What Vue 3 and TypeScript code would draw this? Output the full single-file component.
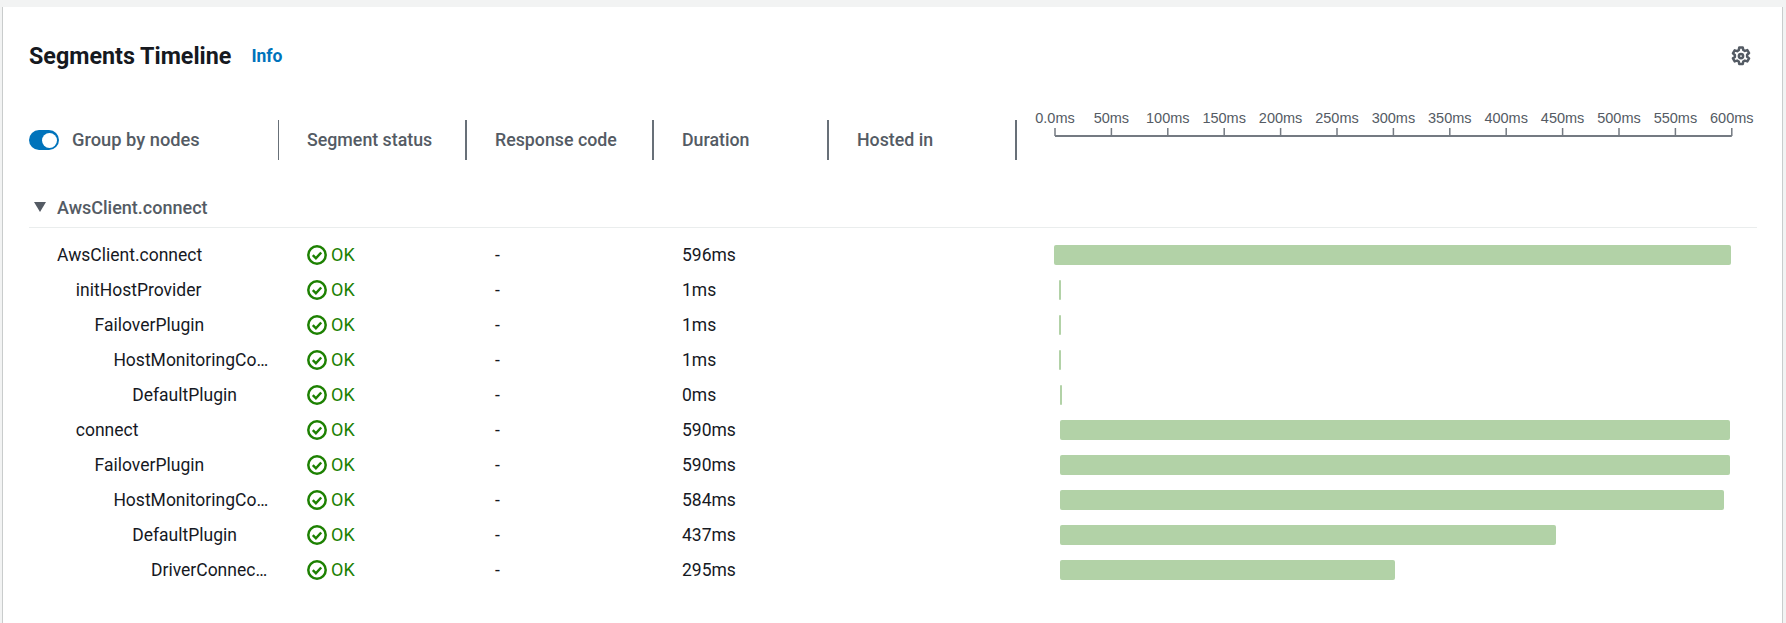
<script setup lang="ts">
// Segments timeline panel: a fixed column grid for the table part and a 0-600ms
// ruler; bars are placed from their start and end in ms.
interface Seg { name: string; depth: number; duration: string; start: number; end: number }

const PX_PER_MS = 1.128
const AXIS_LEFT = 38 // first tick, from the left edge of the timeline column

const ticks = Array.from({ length: 13 }, (_, i) => ({
  x: AXIS_LEFT + i * 50 * PX_PER_MS,
  label: i === 0 ? '0.0ms' : `${i * 50}ms`,
}))

const segments: Seg[] = [
  { name: 'AwsClient.connect', depth: 0, duration: '596ms', start: -1, end: 599 },
  { name: 'initHostProvider', depth: 1, duration: '1ms', start: 3.5, end: 5.3 },
  { name: 'FailoverPlugin', depth: 2, duration: '1ms', start: 3.5, end: 5.3 },
  { name: 'HostMonitoringConnectionPlugin', depth: 3, duration: '1ms', start: 3.5, end: 5.3 },
  { name: 'DefaultPlugin', depth: 4, duration: '0ms', start: 4.43, end: 6.2 },
  { name: 'connect', depth: 1, duration: '590ms', start: 4.5, end: 598.5 },
  { name: 'FailoverPlugin', depth: 2, duration: '590ms', start: 4.5, end: 598.5 },
  { name: 'HostMonitoringConnectionPlugin', depth: 3, duration: '584ms', start: 4.5, end: 593 },
  { name: 'DefaultPlugin', depth: 4, duration: '437ms', start: 4.5, end: 444.5 },
  { name: 'DriverConnectProvider', depth: 5, duration: '295ms', start: 4.5, end: 301 },
]

function barStyle(s: Seg) {
  return {
    marginLeft: `${AXIS_LEFT + s.start * PX_PER_MS}px`,
    width: `${(s.end - s.start) * PX_PER_MS}px`,
  }
}
</script>

<template>
  <main class="panel">
    <header class="title-row">
      <div class="title-left">
        <h2 class="title">Segments Timeline</h2>
        <a class="info">Info</a>
      </div>
      <svg class="gear" viewBox="0 0 16 16" width="20" height="20" fill="none">
        <path d="M6.6 1.2h2.8l.4 2 1.3.75 1.95-.65 1.4 2.4-1.55 1.35v1.5l1.55 1.35-1.4 2.4-1.95-.65-1.3.75-.4 2H6.6l-.4-2-1.3-.75-1.95.65-1.4-2.4L3.1 8.75v-1.5L1.55 5.9l1.4-2.4 1.95.65 1.3-.75z" stroke="#545b64" stroke-width="2" stroke-linejoin="round" />
        <circle cx="8" cy="8" r="1.7" stroke="#545b64" stroke-width="2" />
      </svg>
    </header>

    <div class="cols toolbar">
      <div class="head head-first">
        <span class="toggle"><span class="knob"></span></span>
        <span class="toggle-label">Group by nodes</span>
      </div>
      <div class="head">Segment status</div>
      <div class="head">Response code</div>
      <div class="head">Duration</div>
      <div class="head">Hosted in</div>
      <svg class="ruler" viewBox="0 0 741 40" width="741" height="40">
        <line :x1="AXIS_LEFT" :x2="AXIS_LEFT + 600 * PX_PER_MS" y1="16" y2="16" class="axis" />
        <g v-for="t in ticks" :key="t.label">
          <line :x1="t.x" :x2="t.x" y1="8" y2="16" class="tick" />
          <text :x="t.x" y="3" text-anchor="middle" class="tick-label">{{ t.label }}</text>
        </g>
      </svg>
    </div>

    <div class="group-row">
      <svg class="caret" viewBox="0 0 12 10" width="12" height="10"><path d="M0 0h12L6 10z" fill="#545b64" /></svg>
      <span class="group-name">AwsClient.connect</span>
    </div>

    <div class="rows">
      <div v-for="(s, i) in segments" :key="i" class="cols row">
        <div class="name" :style="{ paddingLeft: `${28 + s.depth * 18.8}px` }">{{ s.name }}</div>
        <div class="cell status">
          <svg viewBox="0 0 20 20" width="20" height="20" fill="none">
            <circle cx="10" cy="10" r="8.7" stroke="#1d8102" stroke-width="2.5" />
            <path d="M5.8 10.2l3.1 3.1 5.3-5.8" stroke="#1d8102" stroke-width="2.5" />
          </svg>
          <span>OK</span>
        </div>
        <div class="cell">-</div>
        <div class="cell">{{ s.duration }}</div>
        <div class="cell"></div>
        <div class="track"><div class="bar" :style="barStyle(s)"></div></div>
      </div>
    </div>
  </main>
</template>

<style>
html, body { margin: 0; background: #f2f3f3; }
</style>

<style scoped>
.panel {
  box-sizing: border-box;
  height: 616px;
  margin: 7px 3px 0 2px;
  padding: 0 25px 0 26px;
  background: #fff;
  border-left: 1px solid #c9cccc;
  border-right: 1px solid #c9cccc;
  font-family: Roboto, "Liberation Sans", sans-serif;
  color: #16191f;
  overflow: hidden;
}
.title-row { display: flex; justify-content: space-between; align-items: center; height: 97px; }
.title-left { display: flex; align-items: center; gap: 20px; }
.title { margin: 0; font-size: 23.3px; font-weight: 700; line-height: 24px; }
.info { font-size: 17.5px; font-weight: 700; color: #0073bb; }
.gear { margin-right: 6px; }
.cols { display: grid; grid-template-columns: 250px 188px 187px 175px 188px 1fr; }
.toolbar { margin-top: 16px; height: 40px; }
.head {
  display: flex;
  align-items: center;
  padding: 0 0 2px 28px;
  border-right: 2px solid #687078;
  font-size: 17.8px;
  font-weight: 500;
  color: #545b64;
}
.head-first { padding-left: 0; border-right-width: 1px; }
.toggle {
  display: flex;
  align-items: center;
  justify-content: flex-end;
  box-sizing: border-box;
  width: 30px;
  height: 20px;
  padding-right: 2px;
  margin: 2px 13px 0 0;
  background: #0073bb;
  border-radius: 10px;
}
.knob { width: 15px; height: 15px; border-radius: 50%; background: #fff; }
.toggle-label { font-size: 18.3px; }
.ruler { overflow: visible; }
.axis, .tick { stroke: #747a82; }
.axis { stroke-width: 2; }
.tick { stroke-width: 1.5; }
.tick-label { font-family: "Liberation Sans", Arial, sans-serif; font-size: 14.5px; fill: #545b64; }
.group-row {
  display: flex;
  align-items: center;
  box-sizing: border-box;
  height: 68px;
  padding: 27px 0 0 5px;
  border-bottom: 1px solid #eaeded;
}
.caret { margin-right: 11px; }
.group-name { font-size: 18px; font-weight: 500; color: #545b64; }
.rows { padding-top: 9px; }
.row { height: 35px; font-size: 17.5px; }
.name {
  overflow: hidden;
  box-sizing: border-box;
  padding-top: 1px;
  padding-right: 9px;
  line-height: 35px;
  white-space: nowrap;
  text-overflow: ellipsis;
}
.cell { display: flex; align-items: center; padding: 1px 0 0 28px; }
.status { gap: 4px; color: #1d8102; }
.status span { font-size: 18px; line-height: 20px; margin-top: -1px; }
.track { padding-top: 8px; }
.bar { height: 20px; border-radius: 2px; background: #b2d2a7; }
</style>
